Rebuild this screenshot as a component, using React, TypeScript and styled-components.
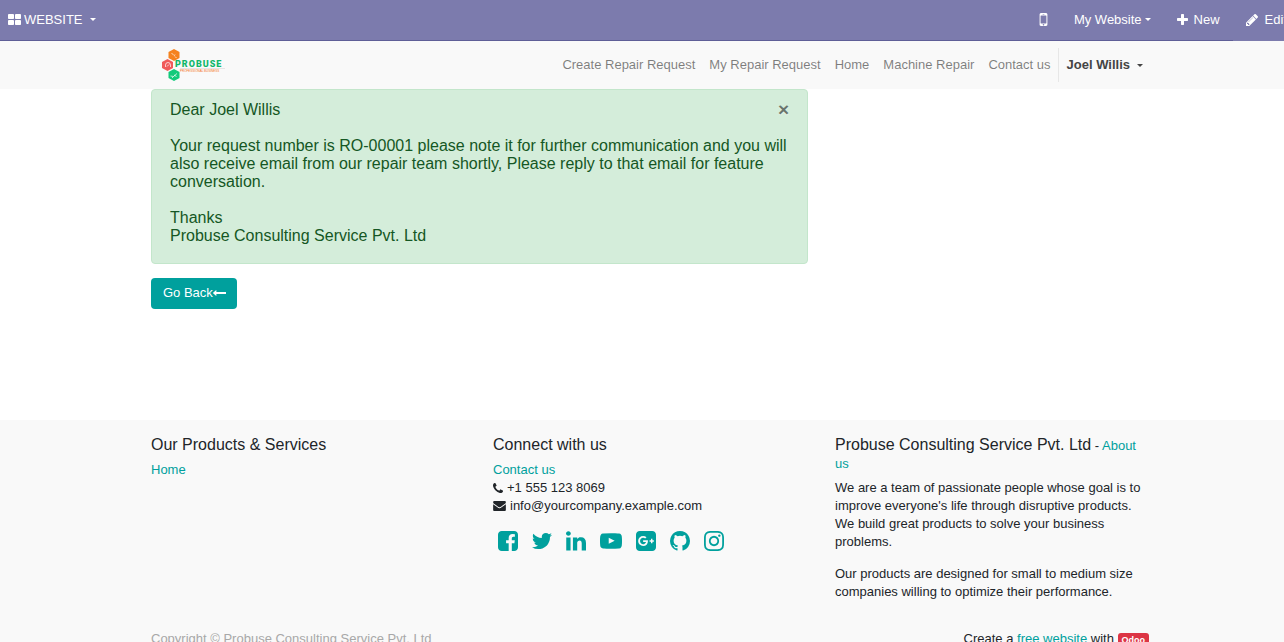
import React from "react";
import styled, { createGlobalStyle } from "styled-components";

const GlobalStyle = createGlobalStyle`
  *, *::before, *::after { box-sizing: border-box; }
  body {
    margin: 0;
    overflow-x: hidden;
    background: #fff;
    color: #212529;
    font-family: "Liberation Sans", Arial, sans-serif;
    font-size: 13px;
    line-height: 18px;
  }
`;

const teal = "#00a09d";

/* Icons, drawn on a 1792-unit grid */

const glyphs = {
  thLarge: {
    box: "64 128 1664 1408",
    d: "M832 1024v384q0 52-38 90t-90 38h-512q-52 0-90-38t-38-90v-384q0-52 38-90t90-38h512q52 0 90 38t38 90zm0-768v384q0 52-38 90t-90 38h-512q-52 0-90-38t-38-90v-384q0-52 38-90t90-38h512q52 0 90 38t38 90zm896 768v384q0 52-38 90t-90 38h-512q-52 0-90-38t-38-90v-384q0-52 38-90t90-38h512q52 0 90 38t38 90zm0-768v384q0 52-38 90t-90 38h-512q-52 0-90-38t-38-90v-384q0-52 38-90t90-38h512q52 0 90 38t38 90z",
  },
  mobile: {
    box: "512 256 768 1280",
    d: "M976 1408q0-33-23.5-56.5t-56.5-23.5-56.5 23.5-23.5 56.5 23.5 56.5 56.5 23.5 56.5-23.5 23.5-56.5zm208-160v-704q0-13-9.5-22.5t-22.5-9.5h-512q-13 0-22.5 9.5t-9.5 22.5v704q0 13 9.5 22.5t22.5 9.5h512q13 0 22.5-9.5t9.5-22.5zm-192-848q0-16-16-16h-160q-16 0-16 16t16 16h160q16 0 16-16zm288-16v1024q0 52-38 90t-90 38h-512q-52 0-90-38t-38-90v-1024q0-52 38-90t90-38h512q52 0 90 38t38 90z",
  },
  plus: {
    box: "192 128 1408 1408",
    d: "M1600 736v192q0 40-28 68t-68 28h-416v416q0 40-28 68t-68 28h-192q-40 0-68-28t-28-68v-416h-416q-40 0-68-28t-28-68v-192q0-40 28-68t68-28h416v-416q0-40 28-68t68-28h192q40 0 68 28t28 68v416h416q40 0 68 28t28 68z",
  },
  pencil: {
    box: "128 149 1515 1515",
    d: "M491 1536l91-91-235-235-91 91v107h128v128h107zm523-928q0-22-22-22-10 0-17 7l-542 542q-7 7-7 17 0 22 22 22 10 0 17-7l542-542q7-7 7-17zm-54-192l416 416-832 832h-416v-416zm683 96q0 53-37 90l-166 166-416-416 166-165q36-38 90-38 53 0 91 38l235 234q37 39 37 91z",
  },
  arrowLeft: {
    box: "64 512 1728 768",
    d: "M1792 800v192q0 14-9 23t-23 9h-1248v224q0 21-19 29t-35-5l-384-350q-10-10-10-23 0-14 10-24l384-354q16-14 35-6 19 9 19 29v224h1248q14 0 23 9t9 23z",
  },
  phone: {
    box: "192 128 1408 1408",
    d: "M1600 1240q0 27-10 70.5t-21 68.5q-21 50-122 106-94 51-186 51-27 0-53-3.5t-57.5-12.5-47-14.5-55.5-20.5-49-18q-98-35-175-83-127-79-264-216t-216-264q-48-77-83-175-3-9-18-49t-20.5-55.5-14.5-47-12.5-57.5-3.5-53q0-92 51-186 56-101 106-122 25-11 68.5-21t70.5-10q14 0 21 3 18 6 53 76 11 19 30 54t35 63.5 31 53.5q3 4 17.5 25t21.5 35.5 7 28.5q0 20-28.5 50t-62 55-62 53-28.5 46q0 9 5 22.5t8.5 20.5 14 24 11.5 19q76 137 174 235t235 174q2 1 19 11.5t24 14 20.5 8.5 22.5 5q18 0 46-28.5t53-62 55-62 50-28.5q14 0 28.5 7t35.5 21.5 25 17.5q25 15 53.5 31t63.5 35 54 30q70 35 76 53 3 7 3 21z",
  },
  envelope: {
    box: "0 256 1792 1408",
    d: "M1792 710v794q0 66-47 113t-113 47h-1472q-66 0-113-47t-47-113v-794q44 49 101 87 362 246 497 345 57 42 92.5 65.5t94.5 48 110 24.5h2q51 0 110-24.5t94.5-48 92.5-65.5q170-123 498-345 57-39 100-87zm0-294q0 79-49 151t-122 123q-376 261-468 325-10 7-42.5 31t-54 38.5-52 32.5-57.5 27-50 9h-2q-23 0-50-9t-57.5-27-52-32.5-54-38.5-42.5-31q-91-64-262-182.5t-205-142.5q-62-42-117-115.5t-55-136.5q0-78 41.5-130t118.5-52h1472q65 0 112.5 47t47.5 113z",
  },
  facebook: {
    box: "128 128 1536 1536",
    d: "M1376 128q119 0 203.5 84.5t84.5 203.5v960q0 119-84.5 203.5t-203.5 84.5h-188v-595h199l30-232h-229v-148q0-56 23.5-84t91.5-28l122-1v-207q-63-9-178-9-136 0-217.5 80t-81.5 226v171h-200v232h200v595h-532q-119 0-203.5-84.5t-84.5-203.5v-960q0-119 84.5-203.5t203.5-84.5h960z",
  },
  twitter: {
    box: "108 128 1576 1536",
    d: "M1684 408q-67 98-162 167 1 14 1 42 0 130-38 259.5t-115.5 248.5-184.5 210.5-258 146-323 54.5q-271 0-496-145 35 4 78 4 225 0 401-138-105-2-188-64.5t-114-159.5q33 5 61 5 43 0 85-11-112-23-185.5-111.5t-73.5-205.5v-4q68 38 146 41-66-44-105-115t-39-154q0-88 44-163 121 149 294.5 238.5t371.5 99.5q-8-38-8-74 0-134 94.5-228.5t228.5-94.5q140 0 236 102 109-21 205-78-37 115-142 178 93-10 186-50z",
  },
  linkedin: {
    box: "128 128 1536 1536",
    d: "M477 625v991h-330v-991h330zm21-306q1 73-50.5 122t-135.5 49h-2q-82 0-132-49t-50-122q0-74 51.5-122.5t134.5-48.5 133 48.5 51 122.5zm1166 729v568h-329v-530q0-105-40.5-164.5t-126.5-59.5q-63 0-105.5 34.5t-63.5 85.5q-11 30-11 81v553h-329q2-399 2-647t-1-296l-1-48h329v144h-2q20-32 41-56t56.5-52 87-43.5 114.5-15.5q171 0 275 113.5t104 332.5z",
  },
  youtube: {
    box: "0 128 1792 1536",
    d: "M711 1128l484-250-484-253v503zm185-862q168 0 324.5 4.5t229.5 9.5l73 4q1 0 17 1.5t23 3 23.5 4.5 28.5 8 28 13 31 19.5 29 26.5q6 6 15.5 18.5t29 58.5 26.5 101q8 64 12.5 136.5t5.5 113.5v40 136q1 145-18 290-7 55-25 99.5t-32 61.5l-14 17q-14 15-29 26.5t-31 19-28 12.5-28.5 8-24 4.5-23 3-16.5 1.5q-251 19-627 19-207-2-359.5-6.5t-200.5-7.5l-49-4-36-4q-36-5-54.5-10t-51-21-56.5-41q-6-6-15.5-18.5t-29-58.5-26.5-101q-8-64-12.5-136.5t-5.5-113.5v-40-136q-1-145 18-290 7-55 25-99.5t32-61.5l14-17q14-15 29-26.5t31-19.5 28-13 28.5-8 23.5-4.5 23-3 17-1.5q251-18 627-18z",
  },
  googlePlus: {
    box: "128 128 1536 1536",
    d: "M1045 905q0-26-6-64h-362v132h217q-3 24-16.5 50t-37.5 53-66.5 44.5-96.5 17.5q-99 0-169-71t-70-171 70-171 169-71q92 0 153 59l104-101q-108-100-257-100-160 0-272 112.5t-112 271.5 112 271.5 272 112.5q165 0 266.5-105t101.5-270zm345 46h109v-110h-109v-110h-110v110h-110v110h110v110h110v-110zm274-535v960q0 119-84.5 203.5t-203.5 84.5h-960q-119 0-203.5-84.5t-84.5-203.5v-960q0-119 84.5-203.5t203.5-84.5h960q119 0 203.5 84.5t84.5 203.5z",
  },
  github: {
    box: "128 128 1536 1536",
    d: "M896 128q209 0 385.5 103t279.5 279.5 103 385.5q0 251-146.5 451.5t-378.5 277.5q-27 5-40-7t-13-30q0-3 .5-76.5t.5-134.5q0-97-52-142 57-6 102.5-18t94-39 81-66.5 53-105 20.5-150.5q0-119-79-206 37-91-8-204-28-9-81 11t-92 44l-38 24q-93-26-192-26t-192 26q-16-11-42.5-27t-83.5-38.5-85-13.5q-45 113-8 204-79 87-79 206 0 85 20.5 150t52.5 105 80.5 67 94 39 102.5 18q-39 36-49 103-21 10-45 15t-57 5-65.5-21.5-55.5-62.5q-19-32-48.5-52t-49.5-24l-20-3q-21 0-29 4.5t-5 11.5 9 14 13 12l7 5q22 10 43.5 38t31.5 51l10 23q13 38 44 61.5t67 30 69.5 7 55.5-3.5l23-4q0 38 .5 88.5t.5 54.5q0 18-13 30t-40 7q-232-77-378.5-277.5t-146.5-451.5q0-209 103-385.5t279.5-279.5 385.5-103z",
  },
  instagram: {
    box: "128 128 1536 1536",
    d: "M1152 896q0-106-75-181t-181-75-181 75-75 181 75 181 181 75 181-75 75-181zm138 0q0 164-115 279t-279 115-279-115-115-279 115-279 279-115 279 115 115 279zm108-410q0 38-27 65t-65 27-65-27-27-65 27-65 65-27 65 27 27 65zm-502-220q-7 0-76.5-.5t-105.5 0-96.5 3-103 10-71.5 18.5q-50 20-88 58t-58 88q-11 29-18.5 71.5t-10 103-3 96.5 0 105.5.5 76.5-.5 76.5 0 105.5 3 96.5 10 103 18.5 71.5q20 50 58 88t88 58q29 11 71.5 18.5t103 10 96.5 3 105.5 0 76.5-.5 76.5.5 105.5 0 96.5-3 103-10 71.5-18.5q50-20 88-58t58-88q11-29 18.5-71.5t10-103 3-96.5 0-105.5-.5-76.5.5-76.5 0-105.5-3-96.5-10-103-18.5-71.5q-20-50-58-88t-88-58q-29-11-71.5-18.5t-103-10-96.5-3-105.5 0-76.5.5zm768 630q0 229-5 317-10 208-124 322t-322 124q-88 5-317 5t-317-5q-208-10-322-124t-124-322q-5-88-5-317t5-317q10-208 124-322t322-124q88-5 317-5t317 5q208 10 322 124t124 322q5 88 5 317z",
  },
};

type GlyphName = keyof typeof glyphs;

const IconSvg = styled.svg`
  display: block;
  flex: none;
  fill: currentColor;
`;

function Icon({ name, width, height }: { name: GlyphName; width: number; height: number }) {
  const glyph = glyphs[name];
  return (
    <IconSvg width={width} height={height} viewBox={glyph.box} aria-hidden="true">
      <path d={glyph.d} />
    </IconSvg>
  );
}

const Caret = styled.span<{ $gap: number }>`
  margin-left: ${(p) => p.$gap}px;
  border: 3px solid transparent;
  border-top-color: currentColor;
  border-bottom: 0;
`;

/* Page frame */

const Page = styled.div`
  min-width: 1300px;
`;

const Container = styled.div`
  max-width: 1026px;
  margin: 0 auto;
  padding: 0 14px;
`;

/* Editor bar */

const EditorBar = styled.header`
  display: flex;
  height: 41px;
  background: #7c7bad;
`;

const EditorMain = styled.div`
  flex: 1;
  display: flex;
  justify-content: space-between;
  border-bottom: 1px solid #5f5e97;
`;

const BarGroup = styled.div`
  display: flex;
`;

const BarButton = styled.button<{ $gap?: number; $pad?: string }>`
  display: flex;
  align-items: center;
  gap: ${(p) => p.$gap ?? 0}px;
  height: 39px;
  padding: ${(p) => p.$pad ?? "0 13px"};
  border: 0;
  background: none;
  color: #fff;
  font: inherit;
`;

/* Site navigation */

const NavBar = styled.nav`
  background: #f9f9f9;
`;

const NavRow = styled(Container)`
  display: flex;
  align-items: center;
  justify-content: space-between;
  height: 48px;
`;

const Brand = styled.a`
  display: block;
  padding-left: 10px;
`;

const BrandSvg = styled.svg`
  display: block;
`;

const Wordmark = styled.text`
  font-family: Roboto, sans-serif;
  font-size: 9px;
  font-weight: 900;
  letter-spacing: 1px;
  fill: #12b76a;
`;

const Tagline = styled.text`
  font-size: 3px;
  fill: #f5741c;
`;

const Menu = styled.ul`
  display: flex;
  align-items: center;
  margin: 0;
  padding: 0;
  list-style: none;
`;

const MenuItem = styled.li<{ $divided?: boolean }>`
  border-left: ${(p) => (p.$divided ? "1px solid #e7e7e7" : "0")};
`;

const MenuLink = styled.a`
  display: block;
  padding: 7px;
  color: rgba(0, 0, 0, 0.5);
  text-decoration: none;
`;

const UserButton = styled.button`
  display: flex;
  align-items: center;
  height: 34px;
  padding: 0 6px 0 8px;
  border: 0;
  background: none;
  color: #444;
  font: inherit;
  font-weight: bold;
`;

/* Confirmation message */

const Main = styled.main`
  min-height: 331px;
`;

const Alert = styled.section`
  position: relative;
  max-width: 657px;
  padding: 11px 18px 18px;
  border: 1px solid #c3e6cb;
  border-radius: 4px;
  background: #d4edda;
  color: #155724;
  font-size: 16px;
`;

const AlertText = styled.p`
  margin: 0 0 18px;

  &:last-of-type {
    margin: 0;
  }
`;

const CloseButton = styled.button`
  position: absolute;
  top: 10px;
  right: 18px;
  padding: 0;
  border: 0;
  background: none;
  color: #000;
  font: bold 19px/20px "Liberation Sans", Arial, sans-serif;
  text-shadow: 0 1px 0 #fff;
  opacity: 0.5;
`;

const PrimaryButton = styled.button`
  display: flex;
  align-items: center;
  height: 31px;
  margin-top: 14px;
  padding: 0 11px 2px 12px;
  border: 0;
  border-radius: 4px;
  background: ${teal};
  color: #fff;
  font: inherit;
`;

/* Footer */

const Footer = styled.footer`
  background: #f9f9f9;
`;

const FooterColumns = styled(Container)`
  display: grid;
  grid-template-columns: repeat(3, 1fr);
  column-gap: 28px;
  padding-top: 15px;
`;

const Column = styled.section`
  min-width: 0;
`;

const Heading = styled.h2`
  display: inline-block;
  margin: 0 0 6px;
  font-size: 16px;
  font-weight: normal;
  line-height: 20px;
`;

const CompanyTitle = styled.div`
  margin: 1px 0 6px;
`;

const CompanyName = styled.span`
  font-size: 16px;
`;

const Link = styled.a`
  color: ${teal};
  text-decoration: none;
`;

const ContactList = styled.ul`
  margin: 0;
  padding: 0;
  list-style: none;
`;

const ContactItem = styled.li`
  display: flex;
  align-items: center;
  gap: 4px;
`;

const Social = styled.div`
  display: flex;
  gap: 14px;
  margin-top: 16px;
  padding-left: 5px;
`;

const Paragraph = styled.p`
  margin: 0 0 14px;
`;

const Legal = styled(Container)`
  display: flex;
  justify-content: space-between;
  padding-top: 15px;
  padding-bottom: 14px;
`;

const Copyright = styled.span`
  color: #a8a8a8;
`;

const Badge = styled.a`
  display: inline-block;
  padding: 0 4px;
  border-radius: 3px;
  background: #dc3545;
  color: #fff;
  font-size: 9px;
  font-weight: bold;
  line-height: 14px;
  text-decoration: none;
`;

const menu = ["Create Repair Request", "My Repair Request", "Home", "Machine Repair", "Contact us"];

const networks: { name: GlyphName; label: string; width: number }[] = [
  { name: "facebook", label: "Facebook", width: 20 },
  { name: "twitter", label: "Twitter", width: 20 },
  { name: "linkedin", label: "LinkedIn", width: 20 },
  { name: "youtube", label: "YouTube", width: 22 },
  { name: "googlePlus", label: "Google Plus", width: 20 },
  { name: "github", label: "GitHub", width: 20 },
  { name: "instagram", label: "Instagram", width: 20 },
];

function Logo() {
  return (
    <BrandSvg width="66" height="36" viewBox="0 0 66 36" role="img" aria-label="Probuse">
      <path d="M13 2l5.500 3v6L13 14l-5.500-3V5z" fill="#f5821f" />
      <path d="M6.500 12l5.500 3v6l-5.500 3L1 21v-6z" fill="#f05a5b" />
      <path d="M13 22l5.500 3v6L13 34l-5.500-3v-6z" fill="#13ca7b" />
      <g fill="none" stroke="#fff" strokeOpacity="0.7">
        <path d="M10.500 6l2 2M14 9.500l1.500 1.500M14 7.500l-1 1.500" />
        <path d="M4.500 20v-2a2.500 2.500 0 0 1 5 0v2M6 19.500l2-2" />
        <path d="M9.500 29l3 .5 3.500-3M11 31l1.500-1.500M13 28l2.500 1.500" />
      </g>
      <path d="M19 21.500h45" stroke="#e4e4e4" />
      <Wordmark x="14" y="20">PROBUSE</Wordmark>
      <Tagline x="19" y="25">PROFESSIONAL BUSINESS</Tagline>
    </BrandSvg>
  );
}

export default function App() {
  return (
    <Page>
      <GlobalStyle />
      <EditorBar>
        <EditorMain>
          <BarButton $gap={3} $pad="0 8px">
            <Icon name="thLarge" width={13} height={11} />
            WEBSITE
            <Caret $gap={4} />
          </BarButton>
          <BarGroup>
            <BarButton aria-label="Mobile preview">
              <Icon name="mobile" width={9} height={13} />
            </BarButton>
            <BarButton>
              My Website
              <Caret $gap={3} />
            </BarButton>
            <BarButton $gap={6}>
              <Icon name="plus" width={11} height={11} />
              New
            </BarButton>
          </BarGroup>
        </EditorMain>
        <BarButton $gap={7}>
          <Icon name="pencil" width={12} height={12} />
          Edit
        </BarButton>
      </EditorBar>

      <NavBar>
        <NavRow>
          <Brand href="#">
            <Logo />
          </Brand>
          <Menu>
            {menu.map((label) => (
              <MenuItem key={label}>
                <MenuLink href="#">{label}</MenuLink>
              </MenuItem>
            ))}
            <MenuItem $divided>
              <UserButton>
                Joel Willis
                <Caret $gap={7} />
              </UserButton>
            </MenuItem>
          </Menu>
        </NavRow>
      </NavBar>

      <Main>
        <Container>
          <Alert role="alert">
            <CloseButton aria-label="Close">×</CloseButton>
            <AlertText>Dear Joel Willis</AlertText>
            <AlertText>
              Your request number is RO-00001 please note it for further communication and you will
              also receive email from our repair team shortly, Please reply to that email for
              feature conversation.
            </AlertText>
            <AlertText>
              Thanks
              <br />
              Probuse Consulting Service Pvt. Ltd
            </AlertText>
          </Alert>
          <PrimaryButton>
            Go Back
            <Icon name="arrowLeft" width={13} height={6} />
          </PrimaryButton>
        </Container>
      </Main>

      <Footer>
        <FooterColumns>
          <Column>
            <Heading>Our Products &amp; Services</Heading>
            <div>
              <Link href="#">Home</Link>
            </div>
          </Column>
          <Column>
            <Heading>Connect with us</Heading>
            <ContactList>
              <ContactItem>
                <Link href="#">Contact us</Link>
              </ContactItem>
              <ContactItem>
                <Icon name="phone" width={10} height={10} />
                +1 555 123 8069
              </ContactItem>
              <ContactItem>
                <Icon name="envelope" width={13} height={10} />
                info@yourcompany.example.com
              </ContactItem>
            </ContactList>
            <Social>
              {networks.map((n) => (
                <Link key={n.name} href="#" aria-label={n.label}>
                  <Icon name={n.name} width={n.width} height={20} />
                </Link>
              ))}
            </Social>
          </Column>
          <Column>
            <CompanyTitle>
              <CompanyName>Probuse Consulting Service Pvt. Ltd</CompanyName> -{" "}
              <Link href="#">About us</Link>
            </CompanyTitle>
            <Paragraph>
              We are a team of passionate people whose goal is to improve everyone's life through
              disruptive products. We build great products to solve your business problems.
            </Paragraph>
            <Paragraph>
              Our products are designed for small to medium size companies willing to optimize their
              performance.
            </Paragraph>
          </Column>
        </FooterColumns>
        <Legal>
          <Copyright>Copyright © Probuse Consulting Service Pvt. Ltd</Copyright>
          <span>
            Create a <Link href="#">free website</Link> with <Badge href="#">Odoo</Badge>
          </span>
        </Legal>
      </Footer>
    </Page>
  );
}
